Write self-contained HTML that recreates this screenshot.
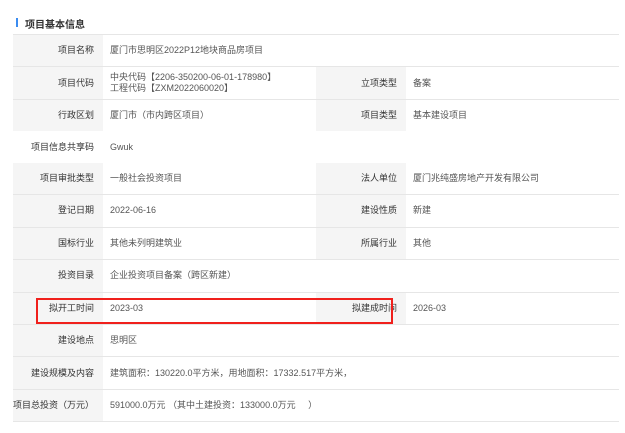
<!DOCTYPE html>
<html><head><meta charset="utf-8"><style>
body{margin:0;background:#fff;font-family:"Liberation Sans","Noto Sans CJK SC",sans-serif;}
.t{position:absolute;left:25px;top:16px;font-size:10px;font-weight:bold;color:#333;}
.bar{position:absolute;left:16px;top:18px;width:2px;height:9px;background:#3b8cf0;}
table{position:absolute;left:13px;top:34px;border-collapse:collapse;table-layout:fixed;width:606px;font-size:9px;}
td{height:31.45px;border-top:1px solid #e6e6e6;border-bottom:1px solid #e6e6e6;padding:0;color:#555;vertical-align:middle;line-height:11px;}
td.l{background:#f5f5f5;color:#333;text-align:right;padding-right:9px;}
td.v{padding-left:7px;}
tr.nb td{border-top:none;border-bottom:none;}
.red{position:absolute;left:36px;top:298px;width:353px;height:22px;border:2px solid #f0201c;}
</style></head><body>
<div class="bar"></div><div class="t">项目基本信息</div>
<table>
<colgroup><col style="width:90px"><col style="width:213px"><col style="width:90px"><col style="width:213px"></colgroup>
<tr><td class="l">项目名称</td><td class="v" colspan="3">厦门市思明区2022P12地块商品房项目</td></tr>
<tr><td class="l">项目代码</td><td class="v">中央代码【2206-350200-06-01-178980】<br>工程代码【ZXM2022060020】</td><td class="l">立项类型</td><td class="v">备案</td></tr>
<tr><td class="l" style="border-bottom:none">行政区划</td><td class="v" style="border-bottom:none">厦门市（市内跨区项目）</td><td class="l" style="border-bottom:none">项目类型</td><td class="v" style="border-bottom:none">基本建设项目</td></tr>
<tr class="nb"><td class="l" style="background:#fff">项目信息共享码</td><td class="v" colspan="3">Gwuk</td></tr>
<tr><td class="l" style="border-top:none">项目审批类型</td><td class="v" style="border-top:none">一般社会投资项目</td><td class="l" style="border-top:none">法人单位</td><td class="v" style="border-top:none">厦门兆纯盛房地产开发有限公司</td></tr>
<tr><td class="l">登记日期</td><td class="v">2022-06-16</td><td class="l">建设性质</td><td class="v">新建</td></tr>
<tr><td class="l">国标行业</td><td class="v">其他未列明建筑业</td><td class="l">所属行业</td><td class="v">其他</td></tr>
<tr><td class="l">投资目录</td><td class="v" colspan="3">企业投资项目备案（跨区新建）</td></tr>
<tr><td class="l">拟开工时间</td><td class="v">2023-03</td><td class="l">拟建成时间</td><td class="v">2026-03</td></tr>
<tr><td class="l">建设地点</td><td class="v" colspan="3">思明区</td></tr>
<tr><td class="l">建设规模及内容</td><td class="v" colspan="3">建筑面积：130220.0平方米，用地面积：17332.517平方米，</td></tr>
<tr><td class="l">项目总投资（万元）</td><td class="v" colspan="3">591000.0万元 （其中土建投资：133000.0万元 &nbsp;&nbsp;&nbsp;&nbsp;）</td></tr>
</table>
<div class="red"></div>
</body></html>
